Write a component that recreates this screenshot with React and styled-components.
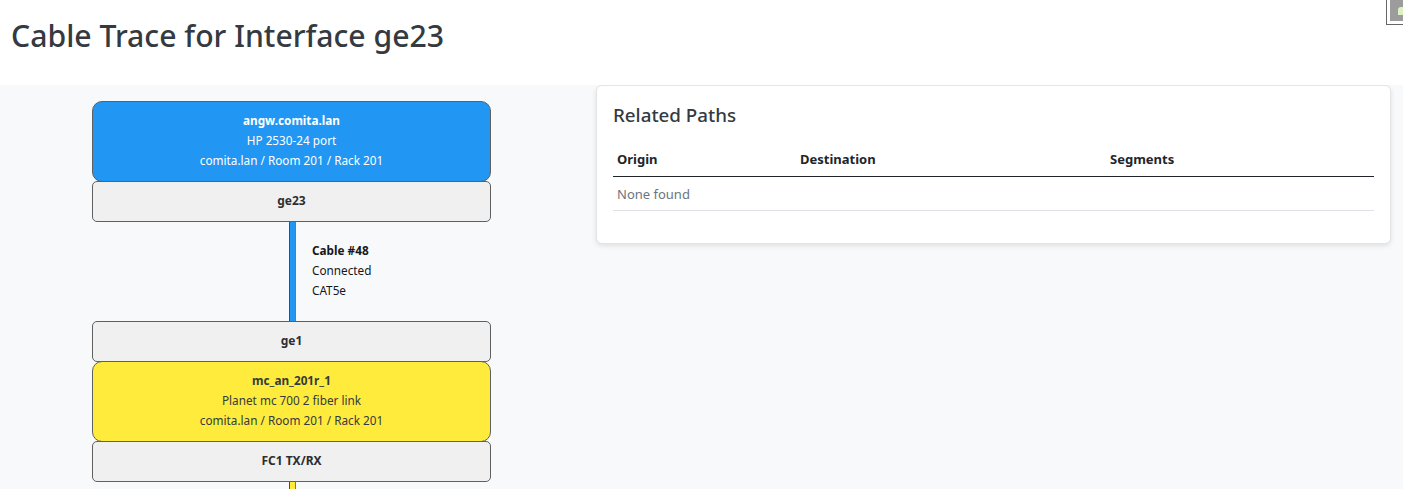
import React from "react";
import styled, { createGlobalStyle } from "styled-components";

const Global = createGlobalStyle`
  html, body {
    margin: 0;
    padding: 0;
    height: 100%;
    overflow: hidden;
    background: #f8f9fa;
  }
  body {
    font-family: "Noto Sans", "Open Sans", sans-serif;
    color: #343a40;
  }
`;

const Header = styled.header`
  position: relative;
  height: 85px;
  background: #fff;
  padding: 14px 11px 0;
  box-sizing: border-box;
`;

const PageTitle = styled.h1`
  margin: 0;
  font-size: 30.2px;
  line-height: 44px;
  font-weight: 500;
  color: #343a40;
`;

const Thumb = styled.div`
  position: absolute;
  top: 0;
  right: 0;
  width: 17px;
  height: 25px;
  padding: 0 0 3px 3px;
  border: 1px solid #666;
  border-width: 0 0 1px 1px;
  background: #fff;
  box-sizing: border-box;
`;

const ThumbImage = styled.div`
  position: relative;
  height: 100%;
  background: #9c9c9c;
  &::after {
    content: "";
    position: absolute;
    top: 7px;
    right: 0;
    width: 5px;
    height: 8px;
    background: #dcf0c4;
    border-radius: 3px 0 0 0;
  }
`;

const Main = styled.main`
  display: grid;
  grid-template-columns: 596px 795px;
  background: #f8f9fa;
  min-height: 404px;
`;

const Trace = styled.div`
  display: flex;
  flex-direction: column;
  padding: 16px 0 0 92px;
  width: 399px;
`;

const Device = styled.div`
  height: 81px;
  margin-bottom: -1px;
  box-sizing: border-box;
  border: 1px solid #606060;
  border-radius: 10px;
  background: ${(p) => p.$bg};
  color: ${(p) => p.$fg};
  padding-top: 8px;
  text-align: center;
  font-size: 11.75px;
  line-height: 20px;
`;

const Port = styled.div`
  height: 41px;
  margin-bottom: -1px;
  box-sizing: border-box;
  border: 1px solid #606060;
  border-radius: 5px;
  background: #f0f0f0;
  color: #2b2f33;
  text-align: center;
  font-size: 12px;
  font-weight: 700;
  line-height: 38px;
`;

const Name = styled.div`
  font-weight: 700;
`;

const CableRow = styled.div`
  display: flex;
  height: ${(p) => p.$h}px;
  margin-top: 1px;
  padding-left: 197px;
`;

const Wire = styled.div`
  width: 7px;
  box-sizing: border-box;
  flex: none;
  border-left: 1px solid #4a4a4a;
  border-right: 1px solid #777;
  background: ${(p) => p.$color};
`;

const CableInfo = styled.div`
  margin-left: 16px;
  padding-top: 18px;
  font-size: 11.75px;
  line-height: 20px;
  color: #16181b;
`;

const Card = styled.section`
  align-self: start;
  height: 159px;
  box-sizing: border-box;
  background: #fff;
  border: 1px solid #e3e4e6;
  border-radius: 6px;
  box-shadow: 0 2px 5px rgba(0, 0, 0, 0.1);
  padding: 15px 16px 0;
`;

const CardTitle = styled.h5`
  margin: 0;
  font-size: 18.75px;
  line-height: 27px;
  font-weight: 500;
  color: #343a40;
`;

const Table = styled.table`
  width: 100%;
  margin-top: 14px;
  border-collapse: collapse;
  font-size: 13px;
  table-layout: fixed;
  color: #212529;
`;

const Th = styled.th`
  box-sizing: border-box;
  text-align: left;
  font-weight: 700;
  padding: 0 4px;
  height: 34px;
  border-bottom: 1px solid #212529;
  width: ${(p) => (p.$w ? `${p.$w}px` : "auto")};
`;

const Td = styled.td`
  box-sizing: border-box;
  padding: 2px 4px 0;
  height: 34px;
  color: #6c757d;
  border-bottom: 1px solid #dee2e6;
`;

export default function App() {
  return (
    <>
      <Global />
      <Header>
        <PageTitle>Cable Trace for Interface ge23</PageTitle>
        <Thumb>
          <ThumbImage />
        </Thumb>
      </Header>
      <Main>
        <Trace>
          <Device $bg="#2196f3" $fg="#fff">
            <Name>angw.comita.lan</Name>
            <div>HP 2530-24 port</div>
            <div>comita.lan / Room 201 / Rack 201</div>
          </Device>
          <Port>ge23</Port>
          <CableRow $h={99}>
            <Wire $color="#2196f3" />
            <CableInfo>
              <Name>Cable #48</Name>
              <div>Connected</div>
              <div>CAT5e</div>
            </CableInfo>
          </CableRow>
          <Port>ge1</Port>
          <Device $bg="#ffeb3b" $fg="#343a40">
            <Name>mc_an_201r_1</Name>
            <div>Planet mc 700 2 fiber link</div>
            <div>comita.lan / Room 201 / Rack 201</div>
          </Device>
          <Port>FC1 TX/RX</Port>
          <CableRow $h={12}>
            <Wire $color="#ffeb3b" />
          </CableRow>
        </Trace>
        <Card>
          <CardTitle>Related Paths</CardTitle>
          <Table>
            <thead>
              <tr>
                <Th $w={183}>Origin</Th>
                <Th $w={310}>Destination</Th>
                <Th>Segments</Th>
              </tr>
            </thead>
            <tbody>
              <tr>
                <Td colSpan={3}>None found</Td>
              </tr>
            </tbody>
          </Table>
        </Card>
      </Main>
    </>
  );
}
